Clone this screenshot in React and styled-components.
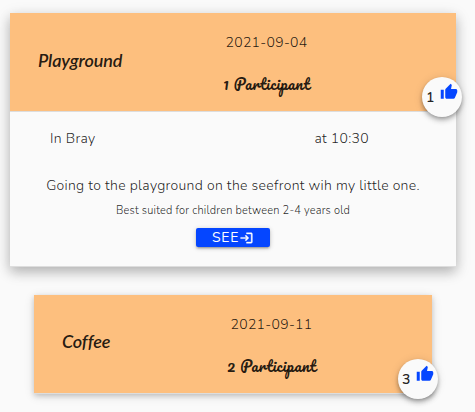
import React from "react";
import styled, { createGlobalStyle } from "styled-components";

const GlobalStyle = createGlobalStyle`
  * { box-sizing: border-box; }
  body {
    margin: 0;
    background: #fafafa;
    color: rgba(0, 0, 0, 0.87);
    font-family: Nunito, "Open Sans", sans-serif;
    font-weight: 300;
    letter-spacing: 0.3px;
    overflow: hidden;
  }
`;

const EventList = styled.main`
  height: 412px;
  padding: 13px 19px 0 10px;
  display: flex;
  flex-direction: column;
  gap: 28px;
  overflow: hidden;
`;

const Card = styled.article`
  flex: none;
  margin: 0 ${(p) => (p.$open ? 0 : 24)}px;
  background: #fafafa;
  box-shadow: ${(p) =>
    p.$open
      ? "0 5px 11px 0 rgba(0,0,0,.18), 0 4px 15px 0 rgba(0,0,0,.15)"
      : "0 2px 5px 0 rgba(0,0,0,.16), 0 2px 10px 0 rgba(0,0,0,.12)"};
`;

const Header = styled.header`
  position: relative;
  height: 99px;
  display: grid;
  grid-template-columns: ${(p) => (p.$open ? "135px 187px" : "116px 187px")};
  padding-left: 28px;
  background: #fdbf7e;
  background-clip: padding-box;
  border-bottom: 1px solid #ddd;
`;

const Title = styled.h2`
  margin: 0;
  align-self: center;
  padding-bottom: ${(p) => (p.$open ? 4 : 6)}px;
  font: italic 600 18px/24px Lato, sans-serif;
  letter-spacing: -0.1px;
`;

const Details = styled.div`
  display: flex;
  flex-direction: column;
  align-items: center;
  padding-top: 18px;
`;

const DateText = styled.time`
  font-size: 14px;
  line-height: 24px;
`;

const Participants = styled.div`
  margin-top: 17px;
  font: 400 15px/24px Pacifico, Lobster, "Brush Script MT", Lato, cursive;
  letter-spacing: 0.4px;
  white-space: pre;
`;

const Badge = styled.div`
  position: absolute;
  right: -6px;
  top: 64px;
  width: 40px;
  height: 40px;
  padding: 0 0 0 4px;
  display: flex;
  align-items: center;
  border-radius: 50%;
  background: #fafafa;
  box-shadow: 0 4px 5px 0 rgba(0,0,0,.14), 0 1px 10px 0 rgba(0,0,0,.12), 0 2px 4px -1px rgba(0,0,0,.3);
  font-size: 14px;
  font-weight: 600;
  gap: 5px;
`;

const ThumbIcon = styled.svg`
  width: 18px;
  height: 18px;
  margin-bottom: 10px;
  fill: #0546ff;
`;

const Body = styled.div`
  height: 155px;
  display: flex;
  flex-direction: column;
  align-items: center;
  padding-top: 15px;
  border-bottom: 1px solid #ddd;
`;

const Meta = styled.div`
  align-self: stretch;
  display: flex;
  justify-content: space-between;
  padding: 0 87px 0 40px;
  font-size: 14px;
  line-height: 24px;
`;

const Description = styled.p`
  margin: 23px 0 0;
  font-size: 14px;
  line-height: 24px;
  white-space: nowrap;
`;

const Note = styled.p`
  margin: 5px 0 0;
  font-size: 11px;
  line-height: 16px;
  letter-spacing: 0.2px;
  white-space: nowrap;
`;

const SeeButton = styled.button`
  width: 74px;
  height: 19px;
  margin: 9px 0 0;
  padding: 0;
  display: flex;
  align-items: center;
  justify-content: center;
  border: 0;
  border-radius: 2px;
  background: #0546ff;
  color: #fff;
  font: 400 14px/19px Nunito, "Open Sans", sans-serif;
  letter-spacing: 0.7px;
  box-shadow: 0 2px 2px 0 rgba(0,0,0,.14), 0 3px 1px -2px rgba(0,0,0,.12), 0 1px 5px 0 rgba(0,0,0,.2);
`;

const EnterIcon = styled.svg`
  width: 15px;
  height: 14px;
  margin-top: 1px;
  fill: currentColor;
  stroke: currentColor;
  stroke-width: 0.7px;
`;

function EventHeader({ title, date, count, likes, open }) {
  return (
    <Header $open={open}>
      <Title $open={open}>{title}</Title>
      <Details>
        <DateText>{date}</DateText>
        <Participants>{count} Participant</Participants>
      </Details>
      <Badge>
        {likes}
        <ThumbIcon viewBox="0 0 24 24">
          <path d="M1 21h4V9H1v12zm22-11c0-1.1-.9-2-2-2h-6.31l.95-4.57.03-.32c0-.41-.17-.79-.44-1.06L14.17 1 7.59 7.59C7.22 7.95 7 8.45 7 9v10c0 1.1.9 2 2 2h9c.83 0 1.54-.5 1.84-1.22l3.02-7.05c.09-.23.14-.47.14-.73v-2z" />
        </ThumbIcon>
      </Badge>
    </Header>
  );
}

export default function App() {
  return (
    <>
      <GlobalStyle />
      <EventList>
        <Card $open>
          <EventHeader open title="Playground" date="2021-09-04" count={1} likes={1} />
          <Body>
            <Meta>
              <span>In Bray</span>
              <span>at 10:30</span>
            </Meta>
            <Description>Going to the playground on the seefront wih my little one.</Description>
            <Note>Best suited for children between 2-4 years old</Note>
            <SeeButton>
              SEE
              <EnterIcon viewBox="0 0 24 24">
                <path d="M11 7 9.6 8.4l2.6 2.6H2v2h10.2l-2.6 2.6L11 17l5-5-5-5zm9 12h-8v2h8c1.1 0 2-.9 2-2V5c0-1.1-.9-2-2-2h-8v2h8v14z" />
              </EnterIcon>
            </SeeButton>
          </Body>
        </Card>
        <Card>
          <EventHeader title="Coffee" date="2021-09-11" count={2} likes={3} />
        </Card>
      </EventList>
    </>
  );
}
